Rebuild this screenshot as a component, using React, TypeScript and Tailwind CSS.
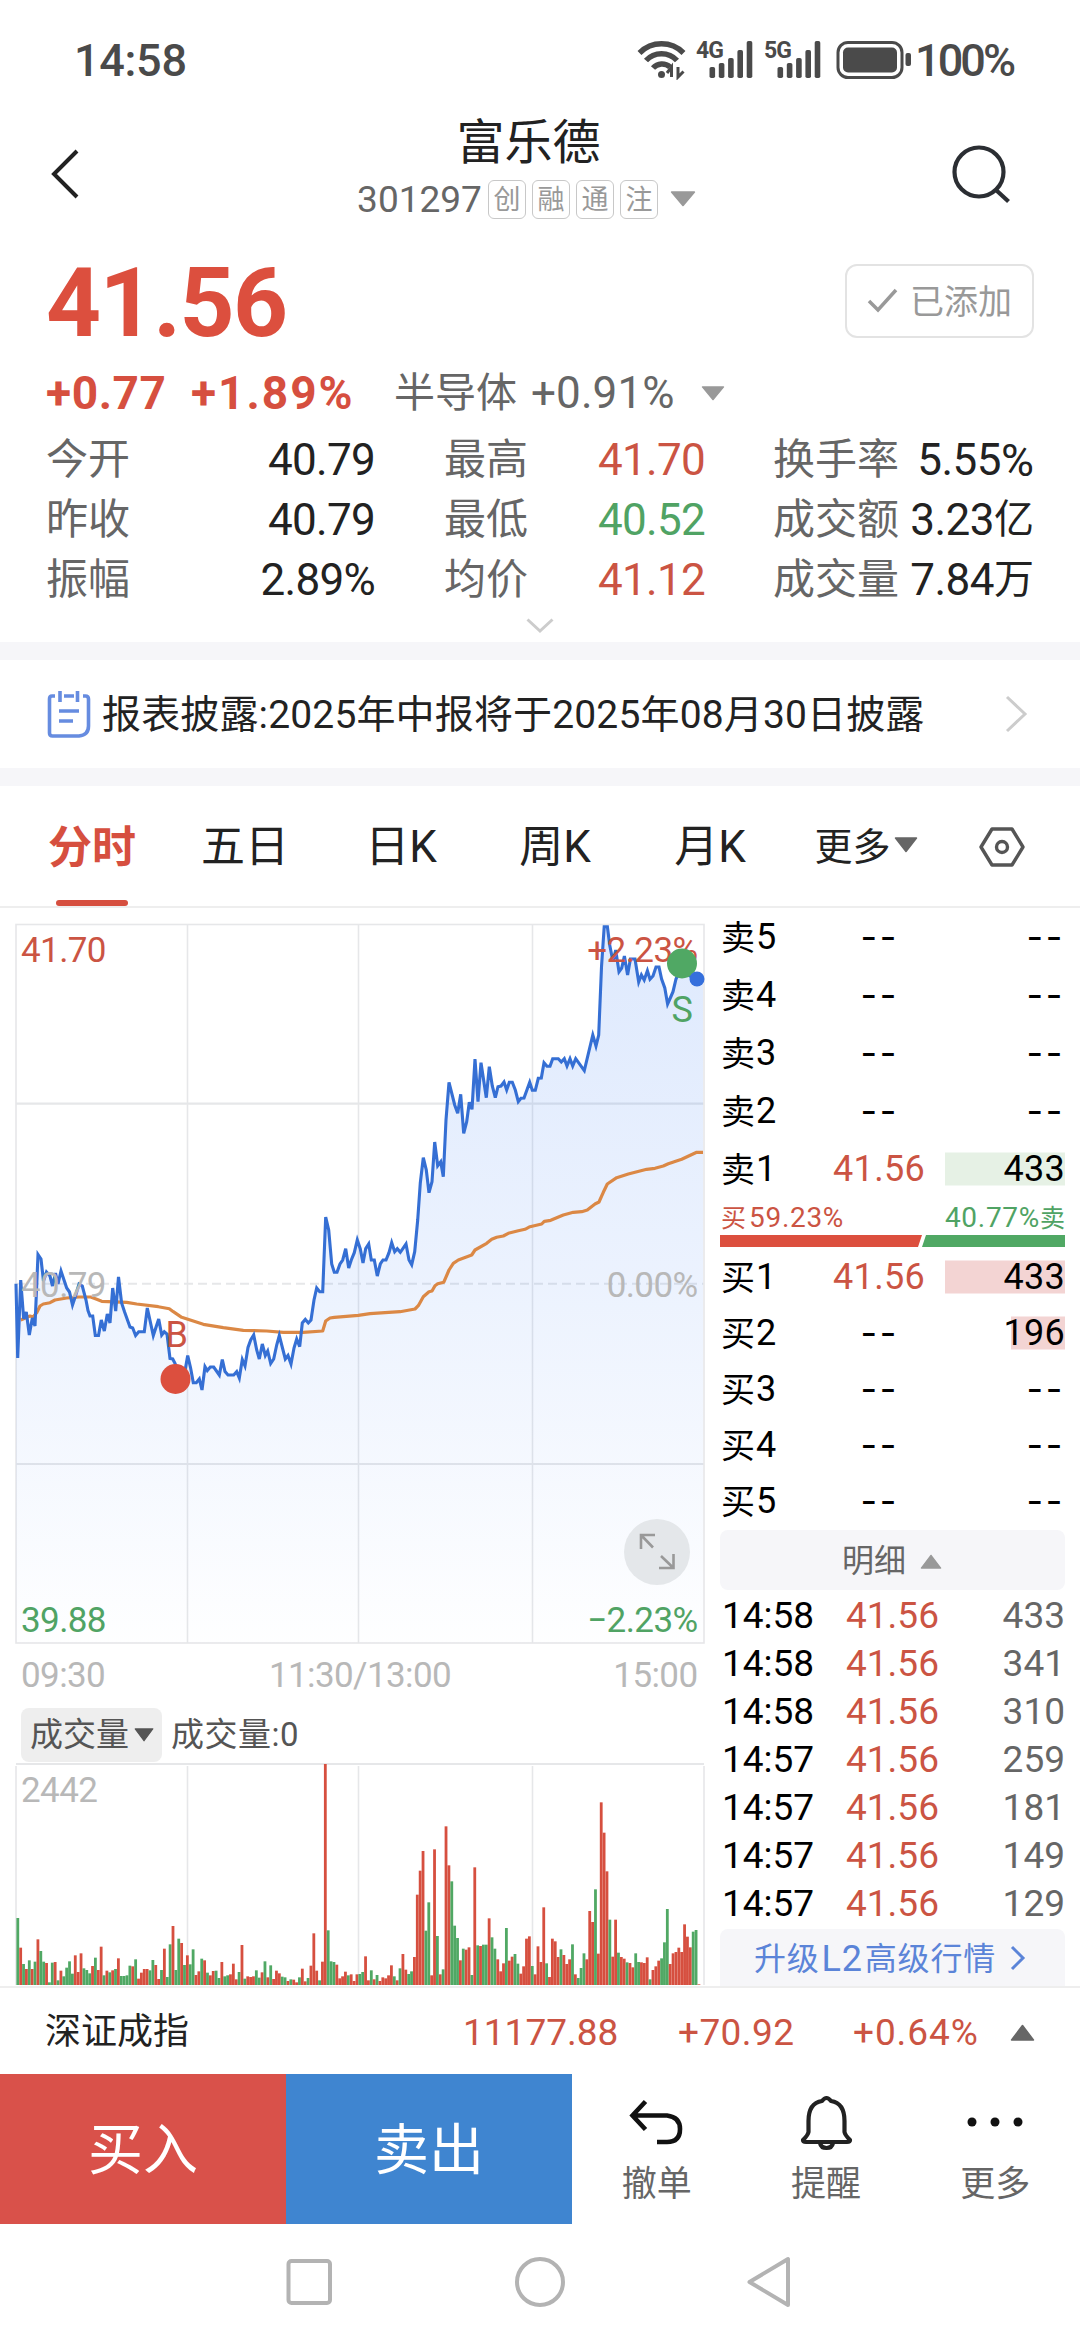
import type { ReactNode } from "react";

const volumes =
  "g201 r112 g63 r48 g74 r48 g70 r137 g102 g70 r66 g8 g67 r69 g14 r43 g26 g52 g71 g34 r89 r39 r95 g50 g45 g35 r57 g82 r45 r115 g29 r43 g38 r44 g48 r80 g27 g27 g29 g58 r56 g77 r19 r37 r48 r48 g44 g75 r60 r18 g45 r109 g24 g122 r177 g45 g139 r126 g60 r89 g62 g107 r30 r41 g79 r74 g37 r29 r42 g43 g21 r69 g26 g29 r32 r64 r17 g39 r120 g19 r26 r24 r26 g44 g22 r38 g71 r23 g59 r18 r43 r35 g25 g23 r12 g17 r16 r8 g23 r49 r11 g21 r58 r155 r43 g14 r70 r663 g164 g71 g69 r61 r20 r26 r40 g29 r32 r12 r32 g33 g39 r86 r14 g44 r17 g30 r12 r23 r20 r29 r59 g26 r14 g50 r93 r46 g33 g41 r84 r271 r343 r402 g163 g248 r29 r407 g147 r32 g47 r476 r359 g311 g178 g141 r74 g109 r106 r113 g30 r353 g119 r117 g121 g121 r200 g143 g109 r77 r41 r65 g171 r73 r85 g93 g64 r34 r56 r139 r146 g57 r32 r116 r69 r233 g65 r24 r139 r131 r84 g107 r90 r63 r77 g122 r32 g21 g51 g95 r77 r222 r189 g287 r94 r548 r457 r341 g196 r85 r196 g97 r84 r79 g68 r66 r53 g95 g69 r68 r66 r83 g17 r45 r56 r73 g80 g128 g228 r63 r95 r99 r112 r99 r182 r145 r113 g160 g165 r2".split(
    " ",
  );

const price =
  "16,1283.7 17.7,1358 20.7,1280 23.7,1319 26.3,1312 29.3,1335 32.3,1318 35,1326 38,1254.5 41,1259 43.5,1281 46.5,1272 50,1276 52.5,1286 55.5,1273 58,1284 61,1271 64,1280 66.7,1288 69.5,1292 72.5,1305 75.5,1296 79,1284 82.3,1286 86,1300 88,1310.5 90,1316 92.7,1316 95.3,1335.5 98.5,1335.5 101.3,1320 104.3,1331 107.3,1314 110,1323 112.7,1288 115.7,1311 118.5,1277 121.6,1303 124.6,1312 130,1327 132.7,1328 135.6,1335.5 138.7,1331.7 144.3,1331.7 147.3,1308 153.3,1335.5 158.7,1319 161.7,1335 164.3,1331.7 167,1334 170,1358.5 172.7,1359 175.3,1364 181.5,1374 185,1371 187.7,1355.5 190.6,1368 193.3,1382.7 196.3,1382.7 199.3,1379 202,1390 205,1366.7 207.3,1370.5 210.3,1367 213.7,1367 219.3,1375 222.3,1359.5 225,1371.5 228,1375 233.7,1375 236.7,1371.7 239.3,1378 242.3,1359.5 245,1366 248,1347.5 250.7,1340 253.7,1335 256.7,1350 259.3,1359 262.3,1344 265.3,1355.5 267.7,1351 270.7,1363.5 273.7,1359 276.7,1345 279.3,1335.5 285.3,1359 288,1355.5 291,1364 294,1348 296.7,1339 299.7,1346.7 302.3,1323 305.3,1319.5 308.3,1323 311,1320 314,1300 316.7,1288 319.7,1291.7 322.7,1291.7 325.7,1217 328.7,1230 331.7,1264 334.3,1272.3 337,1272.3 340,1264 342.7,1260 345.7,1248.7 348.7,1268 351.3,1260 354.3,1252.7 357.3,1240 360.3,1249 363,1263 365.7,1248.7 368.7,1244 371.3,1260 374.3,1260 377.3,1276 380.3,1264 383,1260 386,1260 389,1252.7 391.7,1242.7 394.7,1251.7 397.3,1248.7 400.3,1252.3 406,1244 409,1260 411.7,1264.7 414.7,1251.7 417.7,1220 420.3,1183 423.3,1157.7 426.3,1170 429,1192.7 432,1181.7 434.7,1142 437.7,1165.7 440.7,1161.7 443.3,1176.7 446,1120 449,1082.3 454.7,1105 457.7,1113.3 460.7,1094.3 463.7,1133.3 466.7,1121.7 469.3,1102.3 472,1109.3 475,1059 478,1101.7 481,1062.7 486.3,1097.7 489.3,1066.7 492.3,1086 495.3,1097.7 498,1086.7 501,1086 504,1082 506.7,1090 509.3,1082.3 512.3,1082.3 515.3,1090 518.3,1101.7 521,1098.3 524,1098 529.7,1082.3 532.3,1090.3 535.3,1090.3 538.3,1078.3 541.3,1078 544,1062.7 547,1066.3 550,1066.3 552.7,1058.7 558.3,1058.7 561.3,1062 564.3,1058.7 567,1066 570,1058.7 572.7,1066 575.7,1058.7 584.3,1070.7 592.8,1035 596,1046 598.7,1035 601.5,967 604.2,926.7 607.4,926.7 609.7,945 613,961.7 615.7,950 619,971.7 621.7,968 624.4,956 627.6,975 630.4,959 635,959 638.7,982 641.4,975 644.2,980 647.4,970.7 650,979.3 653,976 656,967 659,967 661.6,979 664.8,988 667.6,1004 670.3,998 673,991.7 676,979 681,968 690,976 703,979";

const average =
  "20.7,1320 30,1316 33,1317 36.7,1312.7 40,1306 43.3,1304 50,1302.7 55,1300 66.7,1298 79,1297 90.7,1297 96.7,1299.3 101.7,1301.3 126.7,1302.3 136.7,1304 158.3,1306.7 169.3,1308.7 173.3,1311.7 181.7,1317.3 203.3,1324.3 223.3,1327.7 243.3,1330.3 266.7,1331 283.3,1332.3 303.3,1332.3 322.7,1331 325.7,1321 330,1318 334.3,1317.3 358.3,1315.3 370,1313.7 400,1311.7 415,1309 418.3,1305.7 423.3,1296.7 429,1291.7 432,1291 435,1285.7 437.7,1283.7 443.7,1282.3 449,1270 453.3,1263.3 458.3,1260 471.7,1255 475,1250 486.7,1243.3 491.7,1239.3 496.7,1237.3 503.3,1236 508.3,1233.3 518.3,1230.7 525,1229.3 530,1226.7 541.7,1224 544.3,1221.3 550.7,1220.3 563.3,1215 573.3,1212.3 581.7,1211.7 587.3,1210 595,1204 599,1202 603.3,1192.3 607.3,1184 616.7,1177.7 628.3,1174 646.7,1169.3 655,1168.3 663.3,1166 668.3,1163.7 681.7,1159.3 696.7,1152.3 703,1152.3";

const asks = [
  ["卖5", "--", "--"],
  ["卖4", "--", "--"],
  ["卖3", "--", "--"],
  ["卖2", "--", "--"],
  ["卖1", "41.56", "433"],
];
const bids = [
  ["买1", "41.56", "433"],
  ["买2", "--", "196"],
  ["买3", "--", "--"],
  ["买4", "--", "--"],
  ["买5", "--", "--"],
];
const trades = [
  ["14:58", "433"],
  ["14:58", "341"],
  ["14:58", "310"],
  ["14:57", "259"],
  ["14:57", "181"],
  ["14:57", "149"],
  ["14:57", "129"],
];
const stats = [
  ["今开", "40.79", "最高", "41.70", "换手率", "5.55", "%"],
  ["昨收", "40.79", "最低", "40.52", "成交额", "3.23", "亿"],
  ["振幅", "2.89%", "均价", "41.12", "成交量", "7.84", "万"],
];

function Triangle({ className, up = false }: { className: string; up?: boolean }) {
  return (
    <svg viewBox="0 0 24 16" preserveAspectRatio="none" className={className}>
      <path
        d={up ? "M12 1.5 L22.5 15 H1.5 Z" : "M12 14.5 L22.5 1 H1.5 Z"}
        fill="currentColor"
        stroke="currentColor"
        strokeWidth="1.5"
        strokeLinejoin="round"
      />
    </svg>
  );
}

function Signal({ label }: { label: string }) {
  return (
    <div className="relative h-[40px] w-[58px] shrink-0">
      <svg width="58" height="40" viewBox="0 0 58 40" fill="#4a4a4a">
        {[27, 23, 18, 10, 1].map((y, i) => (
          <rect key={y} x={13.5 + i * 9.3} y={y} width="5.6" height={38 - y} rx="1.8" />
        ))}
      </svg>
      <span className="absolute left-0 top-[-3px] text-[23px] font-bold leading-[28px] tracking-[-1px]">{label}</span>
    </div>
  );
}

function StatusBar() {
  return (
    <div className="flex h-[118px] items-center pl-[74px] pt-[2px] text-[45px] font-medium text-[#4a4a4a]">
      <div className="w-[562px] tracking-[-0.300px]">14:58</div>
      <svg width="50" height="40" viewBox="0 0 50 40" fill="none" stroke="#4a4a4a" strokeWidth="5.5" className="shrink-0">
        <path d="M3.5 13 A31 31 0 0 1 47.500 13" />
        <path d="M10 20.500 A21 21 0 0 1 41 20.500" />
        <path d="M17 28 A12 12 0 0 1 34 27" />
        <circle cx="25.500" cy="34.500" r="3.500" fill="#4a4a4a" stroke="none" />
        <path d="M35.500 37 V27 L31 33 M42 27 V37 L47.500 31.500" strokeWidth="3" />
      </svg>
      <div className="ml-[10px] flex gap-[10px]">
        <Signal label="4G" />
        <Signal label="5G" />
      </div>
      <svg width="78" height="40" viewBox="0 0 78 40" className="ml-[14px] shrink-0">
        <rect x="2" y="2.500" width="64" height="35" rx="10" fill="none" stroke="#4a4a4a" strokeWidth="3" />
        <rect x="7" y="7.500" width="54" height="25" rx="5" fill="#4a4a4a" />
        <rect x="69.500" y="13" width="5.500" height="13" rx="2" fill="#4a4a4a" />
      </svg>
      <div className="ml-[1px] tracking-[-2.900px]">100%</div>
    </div>
  );
}

function Header() {
  return (
    <div className="flex h-[122px] items-start justify-between">
      <svg width="150" height="110" viewBox="0 0 150 110" fill="none" stroke="#222" strokeWidth="4">
        <path d="M77 33 L54 56 L77 79" />
      </svg>
      <div className="mr-[27px] flex flex-col items-center">
        <div className="h-[48px] pl-[4px] text-[48px] leading-[50px] text-[#222]">富乐德</div>
        <div className="mt-[13px] flex h-[40px] items-center gap-[6px]">
          <span className="text-[37px] text-[#666]">301297</span>
          {["创", "融", "通", "注"].map((t) => (
            <span
              key={t}
              className="flex h-[39px] w-[38px] items-center justify-center rounded-[6px] border-[1.5px] border-[#c8c8c8] pt-[2px] text-[27px] leading-none text-[#999]"
            >
              {t}
            </span>
          ))}
          <Triangle className="ml-[6px] h-[16px] w-[26px] text-[#999]" />
        </div>
      </div>
      <svg width="150" height="110" viewBox="930 118 150 110" fill="none" stroke="#2b2e33" strokeWidth="4.200">
        <circle cx="979" cy="172" r="24.500" />
        <path d="M996 190 L1008.500 201.500" />
      </svg>
    </div>
  );
}

function Quote() {
  return (
    <div className="h-[402px] px-[46px]">
      <div className="flex h-[118px] items-center justify-between">
        <div className="pt-[7px] text-[96px] font-bold leading-none tracking-[-1.500px] text-[#dc4f3e]">41.56</div>
        <div className="mt-[3px] flex h-[74px] w-[189px] items-center rounded-[12px] border-2 border-[#e3e3e3] pl-[20px] text-[34px] text-[#999]">
          <svg width="32" height="26" viewBox="0 0 32 26" fill="none" stroke="#999" strokeWidth="3.500">
            <path d="M2 13 L11 22 L29 2" />
          </svg>
          <span className="ml-[11px] pt-[2px]">已添加</span>
        </div>
      </div>
      <div className="flex h-[70px] items-center text-[46px] leading-none text-[#666]">
        <span className="w-[145px] font-bold tracking-[0.600px] text-[#d64f3f]">+0.77</span>
        <span className="w-[203px] font-bold tracking-[2px] text-[#d64f3f]">+1.89%</span>
        <span className="text-[41px]">半导体</span>
        <span className="ml-[14px] w-[146px] text-[44px] tracking-[0.100px]">+0.91%</span>
        <Triangle className="ml-[24px] h-[15px] w-[24px] text-[#999]" />
      </div>
      <div className="pt-[2px]">
        {stats.map((r, i) => (
          <div key={r[0]} className="flex h-[60px] items-center text-[42px] leading-none text-[#666]">
            <span className="w-[129px]">{r[0]}</span>
            <span className="w-[200px] text-right text-[44px] tracking-[-0.700px] text-[#222]">{r[1]}</span>
            <span className="ml-[69px] w-[100px]">{r[2]}</span>
            <span
              className={
                i === 1
                  ? "w-[161px] text-right text-[44px] tracking-[-0.700px] text-[#50a364]"
                  : "w-[161px] text-right text-[44px] tracking-[-0.700px] text-[#cb5443]"
              }
            >
              {r[3]}
            </span>
            <span className="ml-[68px] w-[127px]">{r[4]}</span>
            <span className="flex grow items-center justify-end text-[#222]">
              <span className="text-[44px] tracking-[-0.500px]">{r[5]}</span>
              <span className={r[6] === "%" ? "text-[45px]" : "text-[40px]"}>{r[6]}</span>
            </span>
          </div>
        ))}
      </div>
      <div className="flex justify-center pt-[8px]">
        <svg width="28" height="16" viewBox="0 0 28 16" fill="none" stroke="#ccc" strokeWidth="3">
          <path d="M1.500 1.500 L14 13 L26.500 1.500" />
        </svg>
      </div>
    </div>
  );
}

function Notice() {
  return (
    <div className="box-border flex h-[144px] items-center border-y-[18px] border-[#f6f6f9] px-[46px]">
      <svg width="46" height="50" viewBox="0 0 46 50" fill="none" stroke="#668ce0" strokeWidth="3.600" className="shrink-0">
        <path d="M9 7 H6 Q3.500 7 3.500 10 V44 Q3.500 47 6.500 47 H33 Q42.500 46 42.500 37 V10 Q42.500 7 39.500 7 H37 M18 7 H28" />
        <path d="M14 2 V13 M31.500 2 V13 M13 22 H33 M13 32 H27" />
      </svg>
      <div className="ml-[10px] grow whitespace-nowrap pt-[2px] text-[39px] tracking-[0.150px] text-[#222]">
        报表披露:2025年中报将于2025年08月30日披露
      </div>
      <svg width="30" height="38" viewBox="0 0 30 38" fill="none" stroke="#ccc" strokeWidth="3">
        <path d="M3 2 L21 19 L3 36" />
      </svg>
    </div>
  );
}

function Tab({ children, className }: { children: ReactNode; className: string }) {
  return <div className={"flex h-full items-center justify-center pt-[2px] " + className}>{children}</div>;
}

function Tabs() {
  return (
    <div className="flex h-[122px] border-b-2 border-[#eee] text-[44px] text-[#222]">
      <div className="ml-[26px] flex w-[132px] flex-col items-center">
        <div className="flex grow items-center pt-[10px] text-[44px] font-bold text-[#d64f3f]">分时</div>
        <div className="h-[6px] w-[72px] rounded-[3px] bg-[#d64f3f]" />
      </div>
      <Tab className="ml-[9px] w-[156px]">五日</Tab>
      <Tab className="w-[156px]">日K</Tab>
      <Tab className="w-[152px]">周K</Tab>
      <Tab className="w-[158px]">月K</Tab>
      <Tab className="ml-[13px] w-[128px] text-[38px]">
        更多
        <Triangle className="mb-[4px] ml-[3px] h-[16px] w-[24px] text-[#666]" />
      </Tab>
      <Tab className="ml-[48px] w-[48px]">
        <svg width="48" height="44" viewBox="0 0 48 44" fill="none" stroke="#555" strokeWidth="3.400" strokeLinejoin="round">
          <path d="M14 4 H34 L45 22 L34 40 H14 L3 22 Z" />
          <circle cx="24" cy="22" r="5.500" />
        </svg>
      </Tab>
    </div>
  );
}

function PriceChart() {
  return (
    <svg width="720" height="792" viewBox="0 908 720 792" className="block" fontFamily="Roboto" fontSize="35" letterSpacing="-0.6">
      <defs>
        <linearGradient id="area" gradientUnits="userSpaceOnUse" x1="0" y1="925" x2="0" y2="1643">
          <stop offset="0" stopColor="#3f80f5" stopOpacity="0.17" />
          <stop offset="0.500" stopColor="#3f80f5" stopOpacity="0.100" />
          <stop offset="1" stopColor="#3f80f5" stopOpacity="0.005" />
        </linearGradient>
      </defs>
      <g stroke="#e6e7e9" strokeWidth="1.600" fill="none">
        <rect x="16" y="924.500" width="688" height="718.500" />
        <path d="M187.500 925 V1643 M358.500 925 V1643 M532.500 925 V1643" />
        <path d="M16 1103.700 H704 M16 1464 H704" strokeWidth="2.200" />
        <path d="M16 1283.700 H704" strokeWidth="2" strokeDasharray="9 5" />
      </g>
      <path d={"M" + price + " L703,1643 L16,1643 Z"} fill="url(#area)" />
      <polyline points={average} fill="none" stroke="#db8845" strokeWidth="3.200" strokeLinejoin="round" />
      <polyline points={price} fill="none" stroke="#356fd4" strokeWidth="3.100" />
      <text x="21" y="962" fill="#cb5443">41.70</text>
      <text x="697.500" y="962" fill="#cb5443" textAnchor="end">+2.23%</text>
      <text x="21" y="1296.500" fill="#b8b8b8">40.79</text>
      <text x="697.500" y="1296.500" fill="#b8b8b8" textAnchor="end">0.00%</text>
      <text x="21" y="1632" fill="#50a364">39.88</text>
      <text x="697.500" y="1632" fill="#50a364" textAnchor="end">−2.23%</text>
      <g fill="#b8b8b8">
        <text x="21" y="1687">09:30</text>
        <text x="360" y="1687" textAnchor="middle">11:30/13:00</text>
        <text x="697.500" y="1687" textAnchor="end">15:00</text>
      </g>
      <circle cx="175.500" cy="1379" r="15" fill="#dc4f3e" />
      <text x="176.500" y="1347" textAnchor="middle" fill="#cb5443" fontSize="36">B</text>
      <circle cx="682" cy="963.500" r="15" fill="#50a864" />
      <text x="682" y="1022" textAnchor="middle" fill="#50a364" fontSize="36">S</text>
      <circle cx="697" cy="979" r="7.500" fill="#356fdc" />
      <circle cx="657" cy="1552" r="33" fill="#e4e7ea" />
      <path
        d="M653 1547.500 L641 1535 M641 1549 V1535 H655 M661 1556 L673.500 1568 M673.500 1554 V1568 H659"
        fill="none"
        stroke="#999"
        strokeWidth="2.600"
      />
    </svg>
  );
}

function VolumeChart() {
  return (
    <svg width="720" height="226" viewBox="0 1760 720 226" className="block">
      <path d="M16 1766 V1985 M187.500 1766 V1985 M358.500 1766 V1985 M532.500 1766 V1985 M704 1766 V1985" stroke="#e6e7e9" strokeWidth="1.600" />
      <path d="M16 1764 H704" stroke="#e6e7e9" strokeWidth="2.200" />
      <text x="21" y="1802" fill="#b8b8b8" fontFamily="Roboto" fontSize="35" letterSpacing="-0.6">2442</text>
      {volumes.map((v, i) => {
        const h = Number(v.slice(1)) / 3;
        return (
          <rect
            key={i}
            x={16.400 + i * 2.874}
            y={1985 - h}
            width="2.800"
            height={h}
            fill={v[0] === "r" ? "#d64f3f" : "#50a864"}
          />
        );
      })}
    </svg>
  );
}

function Dashes({ className }: { className: string }) {
  return (
    <div className={"flex justify-end font-[Inter] text-[36px] leading-none tracking-[2.700px] " + className}>--</div>
  );
}

function BookRow({ row, className, bar }: { row: string[]; className: string; bar: string }) {
  return (
    <div className={"flex shrink-0 items-center text-[36px] text-black " + className}>
      <div className="flex w-[80px] items-center pl-px">
        <span className="pt-[2px] text-[34px]">{row[0][0]}</span>
        <span className="ml-[1px]">{row[0][1]}</span>
      </div>
      {row[1] === "--" ? (
        <Dashes className="w-[99px]" />
      ) : (
        <div className="w-[125px] text-right tracking-[0.300px] text-[#cb5443]">{row[1]}</div>
      )}
      {row[2] === "--" ? (
        <Dashes className="ml-auto" />
      ) : (
        <div className="relative ml-auto flex w-[120px] justify-end">
          <div className={"absolute right-0 top-1/2 h-[33px] -translate-y-1/2 " + bar} />
          <span className="relative tracking-[0.300px]">{row[2]}</span>
        </div>
      )}
    </div>
  );
}

function OrderBook() {
  return (
    <div className="mr-[15px] flex h-[1078px] w-[345px] flex-col overflow-hidden whitespace-nowrap">
      {asks.map((r) => (
        <BookRow key={r[0]} row={r} className="h-[58px]" bar="w-[120px] bg-[#e6f1e5]" />
      ))}
      <div className="mt-[3px] flex h-[34px] shrink-0 items-center justify-between pl-px text-[28px]">
        <span className="flex items-center text-[#cb5443]">
          <span className="text-[25px]">买</span>
          <span className="ml-[3px] tracking-[0.700px]">59.23%</span>
        </span>
        <span className="flex items-center text-[#50a364]">
          <span className="tracking-[0.700px]">40.77%</span>
          <span className="text-[25px]">卖</span>
        </span>
      </div>
      <svg width="345" height="12" viewBox="0 0 345 12" className="shrink-0">
        <path d="M0 0 H202 L198 12 H0 Z" fill="#dc4f3e" />
        <path d="M206 0 H345 V12 H202 Z" fill="#50a864" />
      </svg>
      <div className="pt-[2px]">
        {bids.map((r) => (
          <BookRow
            key={r[0]}
            row={r}
            className="h-[56px]"
            bar={r[0] === "买1" ? "w-[120px] bg-[#f3d4d3]" : "w-[54px] bg-[#f3d4d3]"}
          />
        ))}
      </div>
      <div className="mt-auto flex h-[60px] shrink-0 items-center justify-center rounded-[8px] bg-[#f6f6f9] pt-[2px] text-[32px] text-[#666]">
        明细
        <Triangle up className="ml-[14px] mr-[1px] h-[15px] w-[22px] text-[#999]" />
      </div>
      <div className="pt-[1.500px]">
        {trades.map((t, i) => (
          <div key={i} className="flex h-[48px] items-center text-[37px] leading-none">
            <span className="w-[126px] pl-[2px] text-black">{t[0]}</span>
            <span className="text-[#cb5443]">41.56</span>
            <span className="ml-auto text-[#666]">{t[1]}</span>
          </div>
        ))}
      </div>
      <div className="mt-[1.500px] flex h-[57px] shrink-0 items-center justify-center rounded-t-[8px] bg-[#f6f6f9] pt-[3px] text-[32px] leading-none tracking-[0.800px] text-[#5b84d8]">
        升级
        <span className="ml-[2px] text-[36px]">L2</span>
        <span className="ml-[2px]">高级行情</span>
        <svg width="16" height="26" viewBox="0 0 16 26" fill="none" stroke="#5b84d8" strokeWidth="3" className="mb-[3px] ml-[14px] mr-[5px]">
          <path d="M2 2 L13 13 L2 24" />
        </svg>
      </div>
    </div>
  );
}

function Action({ label, children }: { label: string; children: ReactNode }) {
  return (
    <div className="flex flex-1 flex-col items-center pt-[18px] text-[35px] leading-none text-[#666]">
      {children}
      <div className="mt-[15px]">{label}</div>
    </div>
  );
}

export default function App() {
  return (
    <div className="h-[2340px] w-[1080px] overflow-hidden bg-white font-[Roboto,'Noto_Sans_CJK_SC',sans-serif] leading-none">
      <StatusBar />
      <Header />
      <Quote />
      <Notice />
      <Tabs />
      <div className="flex justify-between">
        <div className="w-[720px]">
          <PriceChart />
          <div className="flex h-[60px] items-center pl-[21px] pt-[9px] text-[33px] text-[#555]">
            <div className="flex h-[54px] w-[141px] items-center rounded-[8px] bg-[#eee] pl-[9px]">
              成交量
              <Triangle className="ml-[5px] h-[14px] w-[20px] text-[#555]" />
            </div>
            <span className="ml-[9px] tracking-[0.500px]">成交量:0</span>
          </div>
          <VolumeChart />
        </div>
        <OrderBook />
      </div>
      <div className="flex h-[88px] items-center border-t-2 border-[#eee] pl-[45px] pt-[2px] text-[37px] text-[#cb5443]">
        <span className="w-[418px] text-[36px] text-[#222]">深证成指</span>
        <span className="w-[215px]">11177.88</span>
        <span className="w-[175px] tracking-[0.400px]">+70.92</span>
        <span className="w-[157px] tracking-[0.900px]">+0.64%</span>
        <Triangle up className="h-[17px] w-[25px] text-[#666]" />
      </div>
      <div className="flex h-[150px]">
        <div className="flex w-[286px] items-center justify-center bg-[#d9514a] pt-[3px] text-[55px] text-white">买入</div>
        <div className="flex w-[286px] items-center justify-center bg-[#3f85d0] pt-[3px] text-[55px] text-white">卖出</div>
        <Action label="撤单">
          <svg width="60" height="60" viewBox="627 2092 60 60" fill="none" stroke="#111" strokeWidth="4.600">
            <path d="M645.500 2101.500 L632.500 2115.500 L645.500 2129.500 M633 2115.500 H667 Q680 2117 680 2129 Q680 2142 667 2142 H657" />
          </svg>
        </Action>
        <Action label="提醒">
          <svg width="60" height="60" viewBox="794 2092 60 60" fill="none" stroke="#222" strokeWidth="4.200" strokeLinejoin="round">
            <path d="M806.500 2132 V2121 Q806.500 2103 820 2101 Q824.500 2095 829 2101 Q842.500 2103 842.500 2121 V2132 Q843 2135 848 2140 Q848 2142 845 2142 H804 Q801 2142 801 2140 Q806 2135 806.500 2132 Z" />
            <path d="M818 2143 Q819 2148 824.500 2148 Q830 2148 831 2143" />
          </svg>
        </Action>
        <Action label="更多">
          <svg width="60" height="60" viewBox="965 2092 60 60" fill="#111">
            <circle cx="972" cy="2122" r="4.500" />
            <circle cx="995" cy="2122" r="4.500" />
            <circle cx="1018" cy="2122" r="4.500" />
          </svg>
        </Action>
      </div>
      <svg width="1080" height="116" viewBox="0 2224 1080 116" fill="none" stroke="#b3b3b3" strokeWidth="4" strokeLinejoin="round">
        <rect x="288.500" y="2261" width="41.500" height="42" rx="3" />
        <circle cx="540" cy="2282" r="23" />
        <path d="M788 2259 V2305 L749.500 2282 Z" />
      </svg>
    </div>
  );
}
